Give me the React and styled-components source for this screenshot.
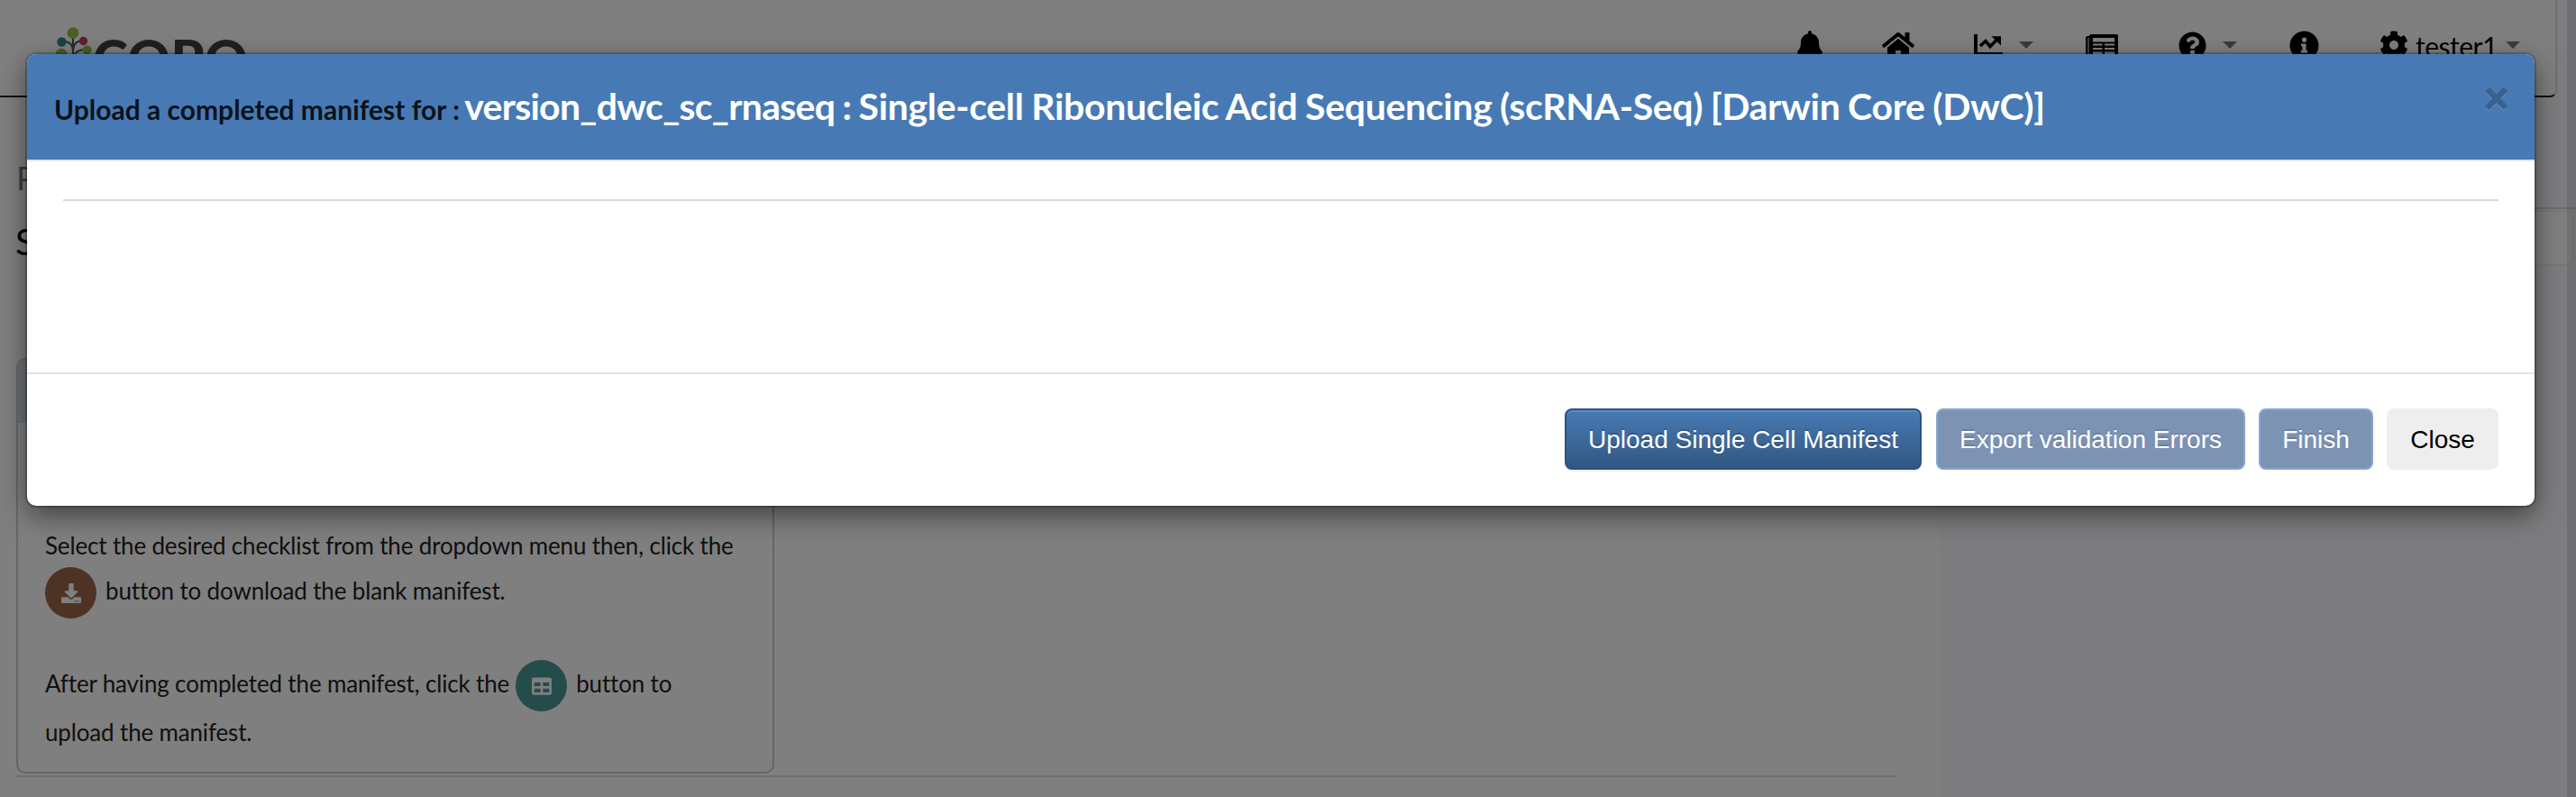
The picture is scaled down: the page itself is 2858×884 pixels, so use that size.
import React from "react";
import styled, { createGlobalStyle } from "styled-components";
import { FaBell, FaHome, FaQuestionCircle, FaInfoCircle, FaCog, FaDownload, FaTable } from "react-icons/fa";

const GlobalStyle = createGlobalStyle`
  *, *::before, *::after { box-sizing: border-box; }
  html, body { margin: 0; padding: 0; }
  body { background: #f9fafb; overflow: hidden; font-family: Lato, "Liberation Sans", sans-serif; }
`;

const Page = styled.div`
  position: relative;
  width: 2858px;
  height: 884px;
  overflow: hidden;
  display: flex;
  flex-direction: column;
  background: linear-gradient(90deg, #fff 2150px, #fafbfe 2150px);
`;

const Columns = styled.div`
  display: flex;
  align-items: flex-start;
`;

const MainColumn = styled.main`
  width: 2150px;
  flex: none;
  display: flex;
  flex-direction: column;
`;

const SideColumn = styled.aside`
  flex: 1;
  padding: 122px 0 0;
`;

const SidePanel = styled.div`
  height: 62px;
  margin: 1px 2px 0 0;
  border: 2px solid #eef0fa;
  border-radius: 10px;
  background: #fff;
`;

const ScrollTrack = styled.div`
  position: absolute;
  top: 0;
  right: 0;
  bottom: 0;
  width: 10px;
  background: rgba(0, 0, 0, 0.1);
`;

const NavBar = styled.header`
  height: 108px;
  margin-right: 21px;
  flex: none;
  display: flex;
  justify-content: space-between;
  align-items: flex-start;
  padding: 28px 39px 0 60px;
  background: #fff;
  border-right: 2px solid #dcdcdc;
  border-bottom: 2px solid #222;
  border-bottom-right-radius: 8px;
`;

const Brand = styled.div`
  display: flex;
  align-items: flex-start;
`;

const BrandName = styled.span`
  font: 900 59px/60px Lato, sans-serif;
  color: #404040;
  margin: 7px 0 0 -1px;
  letter-spacing: 0.4px;
`;

const NavItems = styled.nav`
  display: flex;
  align-items: flex-start;
  height: 50px;
  color: #000;
  font-size: 30px;
`;

const NavItem = styled.div`
  display: flex;
  align-items: center;
  height: 44px;
  margin-right: ${(p) => p.$gap || 0}px;
`;

const UserName = styled.span`
  width: 90px;
  margin-left: 8px;
  padding-top: 1px;
  letter-spacing: -0.5px;
`;

const Caret = styled.i`
  border: 8px solid transparent;
  border-top-color: #777;
  border-bottom: 0;
  margin-left: ${(p) => p.$space}px;
`;

const PageTitle = styled.div`
  margin: 65px 0 0 18px;
  font-size: 37px;
  line-height: 48px;
  color: #777;
`;

const SubTitle = styled.h2`
  margin: 23px 0 0 17px;
  font-size: 40px;
  line-height: 48px;
  font-weight: 400;
`;

const HelpCard = styled.section`
  width: 841px;
  height: 461px;
  margin: 105px 0 0 18px;
  flex: none;
  border: 2px solid #ccc;
  border-radius: 10px;
  overflow: hidden;
`;

const HelpHeading = styled.div`
  height: 70px;
  background: #d0e3ec;
`;

const HelpText = styled.p`
  margin: ${(p) => p.$top}px 0 0 30px;
  font-size: 26px;
  line-height: 50px;
  letter-spacing: -0.16px;
  color: #212121;
  white-space: nowrap;
`;

const HelpLine = styled.span`
  display: flex;
  align-items: center;
  height: ${(p) => p.$height}px;
`;

const RoundIcon = styled.span`
  width: 57px;
  height: 57px;
  flex: none;
  margin: 5px 10px 0 ${(p) => p.$left || 0}px;
  border-radius: 50%;
  display: flex;
  align-items: center;
  justify-content: center;
  color: #fff;
  background: ${(p) => p.$color};
`;

const Rule = styled.hr`
  width: ${(p) => p.$width};
  height: 2px;
  flex: none;
  border: 0;
  margin: ${(p) => p.$margin};
  background: ${(p) => p.$color};
`;

const Backdrop = styled.div`
  position: absolute;
  inset: 0;
  padding: 60px 46px 0 30px;
  background: rgba(0, 0, 0, 0.5);
`;

const Dialog = styled.div`
  height: 501px;
  border-radius: 10px;
  background: #fff;
  box-shadow: 0 0 0 2px rgba(0, 0, 0, 0.2), 0 10px 30px rgba(0, 0, 0, 0.5);
`;

const DialogHeader = styled.header`
  height: 119px;
  padding: 0 28px 0 30px;
  display: flex;
  justify-content: space-between;
  background: #477ab4;
  border-bottom: 2px solid #e5e5e5;
  border-radius: 10px 10px 0 0;
`;

const DialogTitle = styled.h4`
  margin: 29px 0 0;
  font-size: 30px;
  line-height: 58px;
  font-weight: 700;
  color: #0a1219;
  white-space: nowrap;
`;

const ManifestName = styled.span`
  font-size: 41px;
  color: #fff;
  margin-left: -2px;
  letter-spacing: -0.33px;
  word-spacing: -1px;
`;

const ManifestId = styled.span`
  letter-spacing: -0.73px;
  word-spacing: -1px;
`;

const CloseMark = styled.span`
  margin-top: 26px;
  font: 900 49px/42px Lato, sans-serif;
  color: #000;
  opacity: 0.2;
  -webkit-text-stroke: 1.5px #000;
  text-shadow: 0 2px 0 #fff;
`;

const DialogBody = styled.div`
  height: 234px;
  padding: 42px 40px 0;
`;

const DialogFooter = styled.footer`
  border-top: 2px solid #e2e2e2;
  padding: 38px 40px 0;
  display: flex;
  justify-content: flex-end;
`;

const Button = styled.button`
  width: ${(p) => p.$width}px;
  height: 68px;
  margin: 0 0 0 ${(p) => p.$left || 0}px;
  padding: 1px 0 0;
  border: 2px solid #eee;
  border-radius: 8px;
  background: #eee;
  color: #000;
  font: 28px/36px "Liberation Sans", Arial, sans-serif;
  white-space: nowrap;
`;

const PrimaryButton = styled(Button)`
  border-color: #2b5382;
  color: #fff;
  background: linear-gradient(#477ab4, #325882) padding-box, #2d5485 border-box;
  text-shadow: 0 -2px 0 rgba(0, 0, 0, 0.2);
  box-shadow: inset 0 2px 0 rgba(255, 255, 255, 0.15), 0 2px 2px rgba(0, 0, 0, 0.075);
`;

const DisabledButton = styled(Button)`
  border-color: #83a7d3;
  background: #7c93b4;
  color: #fff;
  text-shadow: 0 -2px 0 rgba(0, 0, 0, 0.12);
`;

const TreeLogo = () => (
  <svg width="44" height="56" viewBox="0 0 44 56">
    <path d="M21 10V56M9 18q12 -1 12 12M33 17q-12 0-12 12M37 27q-16-1-16 13M7 32q14 0 14 14" fill="none" stroke="#555" strokeWidth="2" />
    <circle cx="21" cy="8.5" r="6.3" fill="#93be46" />
    <circle cx="8.500" cy="18.500" r="5.2" fill="#358a8a" />
    <circle cx="32.500" cy="17.500" r="4.700" fill="#c43a5e" />
    <circle cx="36.500" cy="27.500" r="5" fill="#93be46" />
    <circle cx="8" cy="32" r="6.200" fill="#93be46" />
  </svg>
);

const ChartIcon = () => (
  <svg width="32" height="24" viewBox="0 0 32 24">
    <path d="M2 0V22H32" fill="none" stroke="#000" strokeWidth="4" />
    <path d="M7 13l6-5.500 5 6 8-8" fill="none" stroke="#000" strokeWidth="3.600" />
    <path d="M19.500 2.300H30V12.600z" />
  </svg>
);

const NewsIcon = () => (
  <svg width="36" height="24" viewBox="0 0 36 24">
    <path fillRule="evenodd" d="M6 0H34a2 2 0 0 1 2 2V24H0V4a2 2 0 0 1 2-2h2a2 2 0 0 1 2-2zM8 4V8.500H32V4zM8 10.500V12.500H18.500V10.500zM21 10.500V12.500H32V10.500zM8 15V17H18.500V15zM21 15V17H32V15zM8 19.500V22H18.500V19.500zM21 19.500V22H32V19.500zM2.500 4V24h1V4z" />
  </svg>
);

export default function App() {
  return (
    <>
      <GlobalStyle />
      <Page>
        <NavBar>
          <Brand>
            <TreeLogo />
            <BrandName>COPO</BrandName>
          </Brand>
          <NavItems>
            <NavItem $gap={64}><FaBell size={32} /></NavItem>
            <NavItem $gap={66}><FaHome size={36} /></NavItem>
            <NavItem $gap={58}><ChartIcon /><Caret $space={18} /></NavItem>
            <NavItem $gap={67}><NewsIcon /></NavItem>
            <NavItem $gap={58}><FaQuestionCircle size={31} /><Caret $space={18} /></NavItem>
            <NavItem $gap={67}><FaInfoCircle size={33} /></NavItem>
            <NavItem><FaCog size={32} /><UserName>tester1</UserName><Caret $space={10} /></NavItem>
          </NavItems>
        </NavBar>
        <Columns>
          <MainColumn>
            <PageTitle>Profile</PageTitle>
            <SubTitle>Single-cell</SubTitle>
            <HelpCard>
              <HelpHeading />
              <HelpText $top={111}>
                <HelpLine $height={50}>Select the desired checklist from the dropdown menu then, click the</HelpLine>
                <HelpLine $height={50}>
                  <RoundIcon $color="#9c6648"><FaDownload size={22} /></RoundIcon>
                  button to download the blank manifest.
                </HelpLine>
              </HelpText>
              <HelpText $top={51}>
                <HelpLine $height={54}>
                  After having completed the manifest, click the
                  <RoundIcon $color="#489894" $left={7}><FaTable size={22} /></RoundIcon>
                  button to
                </HelpLine>
                <HelpLine $height={54}>upload the manifest.</HelpLine>
              </HelpText>
            </HelpCard>
            <Rule $width="2085px" $margin="2px 0 0 18px" $color="#ddd" />
          </MainColumn>
          <SideColumn>
            <Rule $width="100%" $margin="0" $color="#ddd" />
            <SidePanel />
          </SideColumn>
        </Columns>
        <ScrollTrack />
        <Backdrop>
          <Dialog>
            <DialogHeader>
              <DialogTitle>
                Upload a completed manifest for :{" "}
                <ManifestName>
                  <ManifestId>version_dwc_sc_rnaseq : </ManifestId>
                  Single-cell Ribonucleic Acid Sequencing (scRNA-Seq) [Darwin Core (DwC)]
                </ManifestName>
              </DialogTitle>
              <CloseMark>×</CloseMark>
            </DialogHeader>
            <DialogBody>
              <Rule $width="100%" $margin="0" $color="#dadada" />
            </DialogBody>
            <DialogFooter>
              <PrimaryButton $width={396}>Upload Single Cell Manifest</PrimaryButton>
              <DisabledButton $width={343} $left={16}>Export validation Errors</DisabledButton>
              <DisabledButton $width={127} $left={15}>Finish</DisabledButton>
              <Button $width={124} $left={15}>Close</Button>
            </DialogFooter>
          </Dialog>
        </Backdrop>
      </Page>
    </>
  );
}
